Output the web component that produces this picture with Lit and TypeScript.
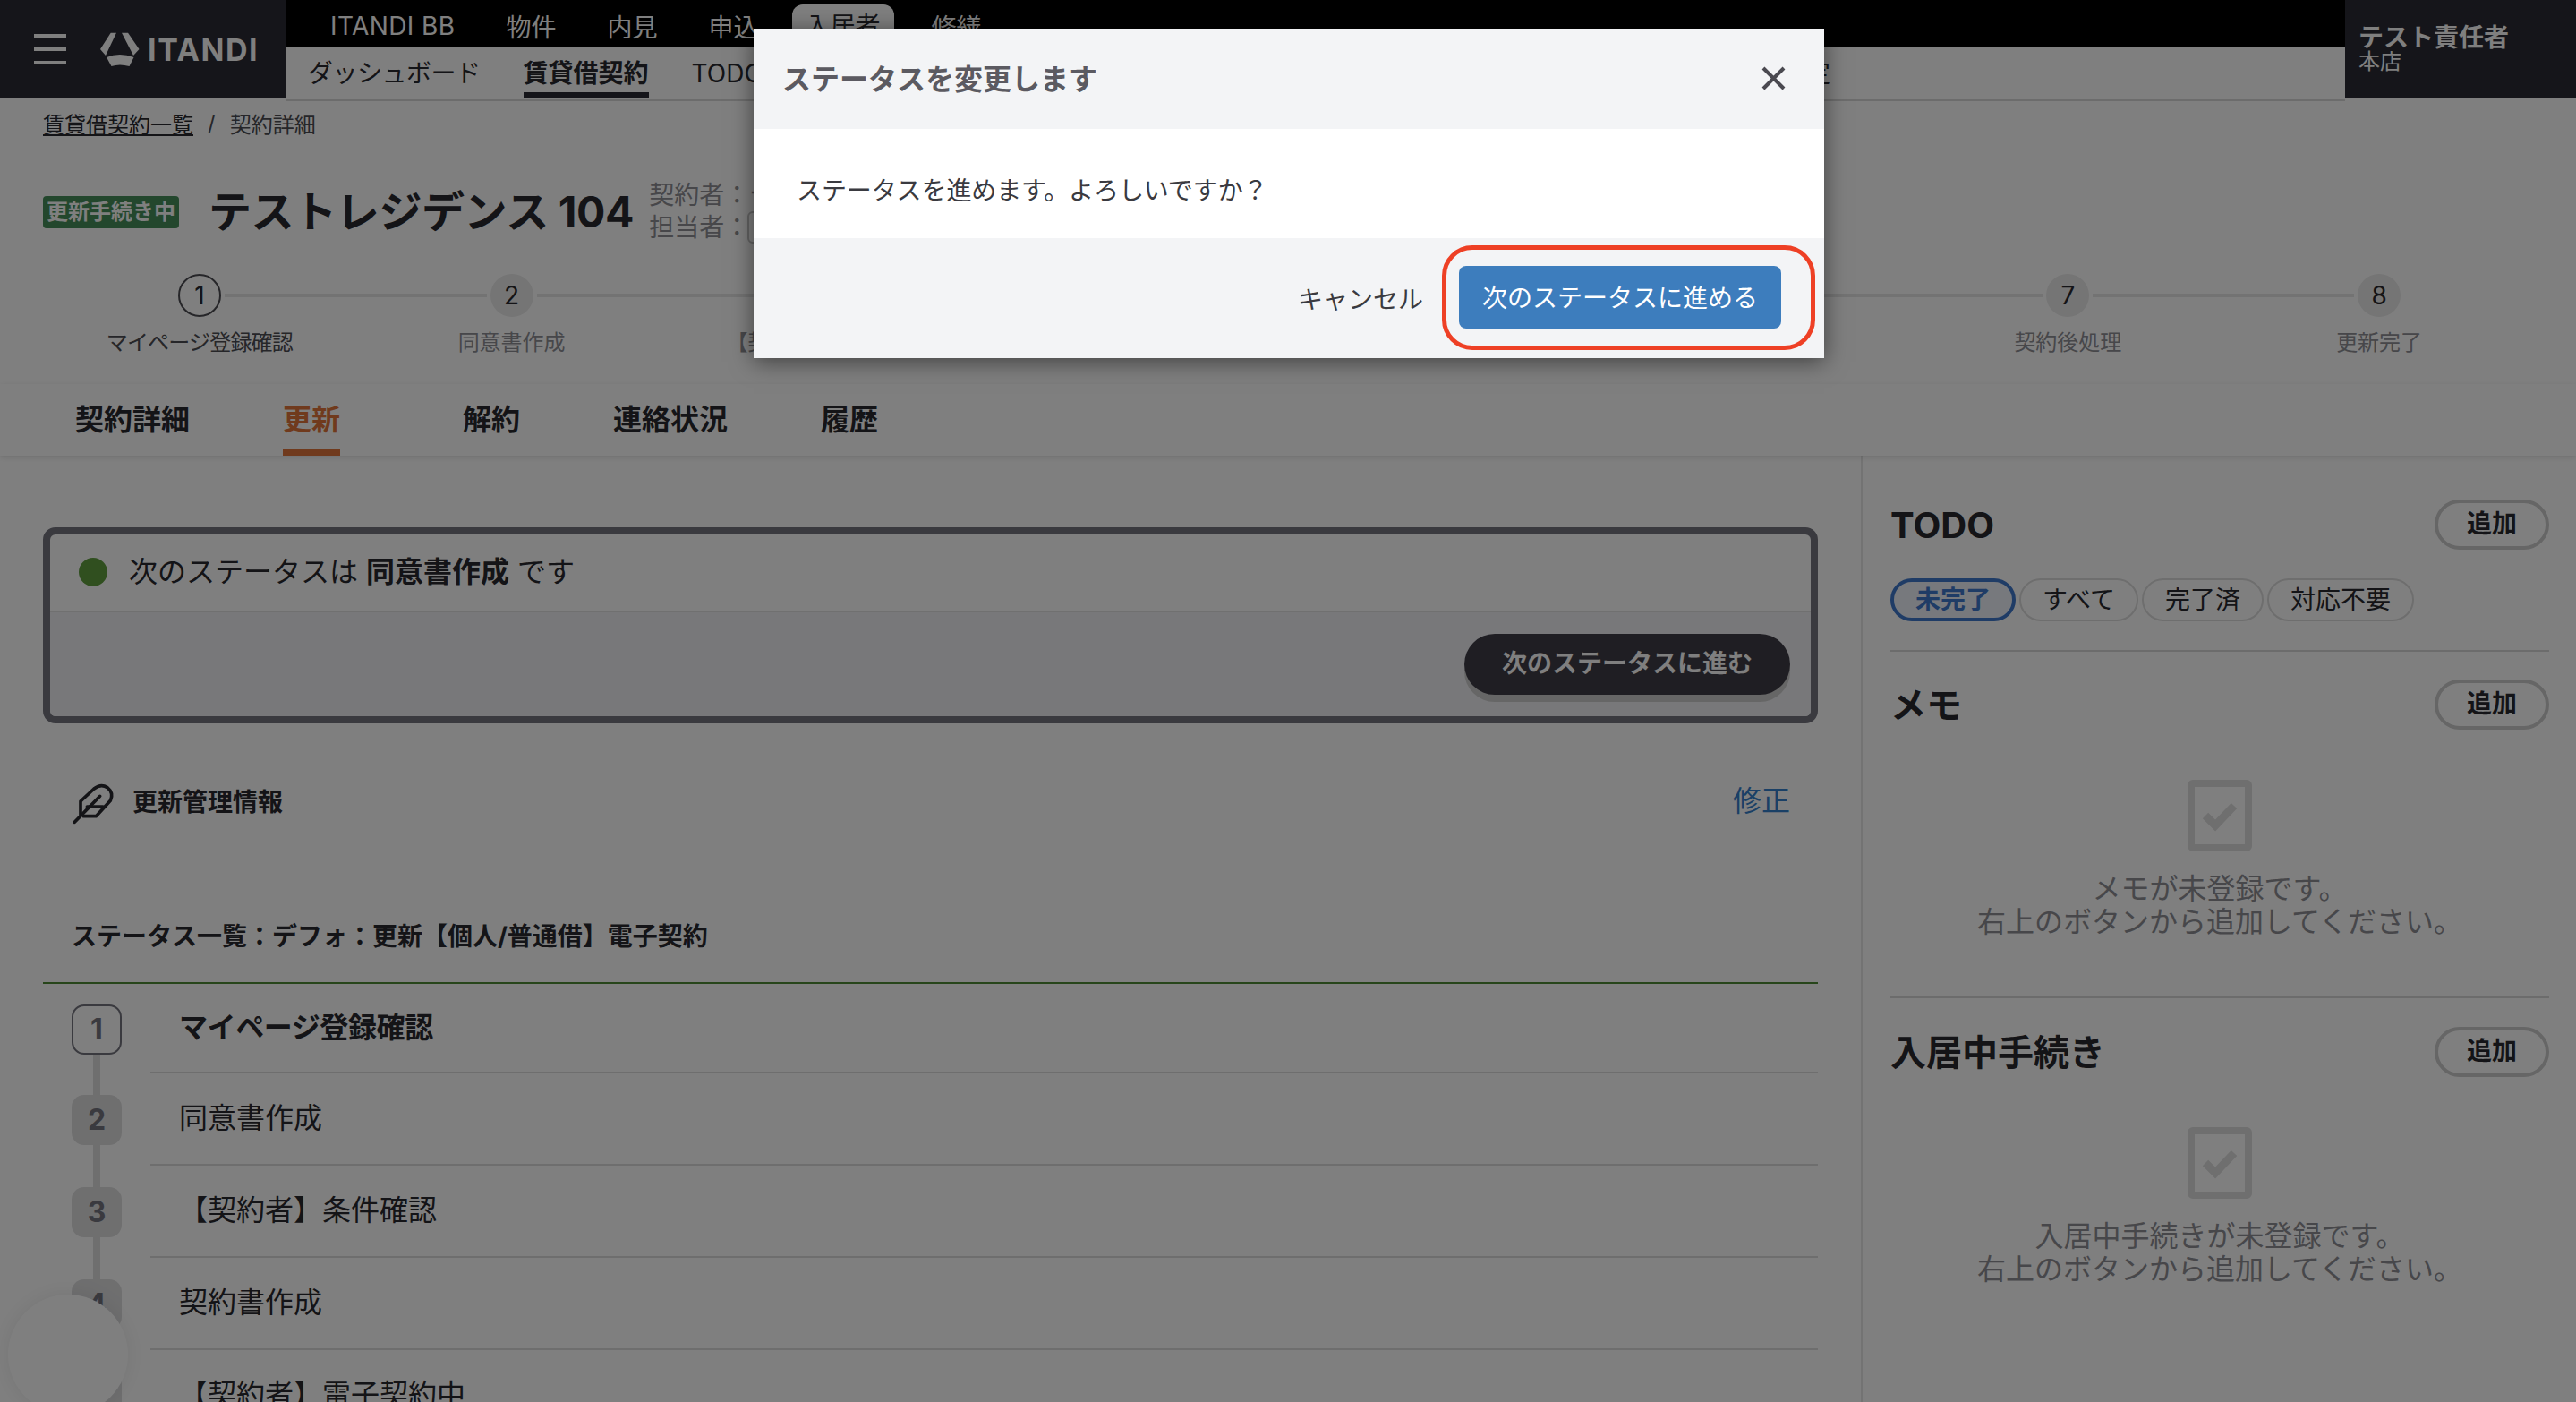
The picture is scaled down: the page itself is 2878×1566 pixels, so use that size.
import { LitElement, html, css } from "lit";
import { customElement } from "lit/decorators.js";

const STEPS = [
  "マイページ登録確認",
  "同意書作成",
  "【契約者】条件確認",
  "契約書作成",
  "【契約者】電子契約中",
  "契約締結",
  "契約後処理",
  "更新完了",
];

const LIST = ["マイページ登録確認", "同意書作成", "【契約者】条件確認", "契約書作成", "【契約者】電子契約中"];

@customElement("app-root")
export class AppRoot extends LitElement {
  static styles = css`
    :host {
      display: block;
      position: relative;
      height: 1566px;
      overflow: hidden;
      background: #fff;
      color: #28282e;
      font-family: Inter, "Noto Sans CJK JP", sans-serif;
      font-size: 28px;
    }
    * {
      box-sizing: border-box;
    }

    /* header */
    .header {
      display: flex;
      height: 110px;
    }
    .brand {
      width: 320px;
      background: #2a2a34;
      display: flex;
      align-items: center;
      padding-left: 38px;
      color: #fff;
    }
    .burger {
      width: 36px;
      height: 34px;
      display: flex;
      flex-direction: column;
      justify-content: space-between;
      margin-right: 38px;
    }
    .burger span {
      height: 4px;
      background: #fff;
    }
    .logo-text {
      font-size: 34px;
      font-weight: 700;
      letter-spacing: 1.6px;
      margin-left: 9px;
    }
    .navs {
      flex: 1;
      display: flex;
      flex-direction: column;
    }
    .topnav {
      height: 54px;
      background: #000;
      color: #fff;
      display: flex;
      align-items: center;
      padding: 5px 0 0 49px;
    }
    .topnav span {
      margin-right: 57px;
    }
    .topnav .brandname {
      letter-spacing: 0.4px;
    }
    .topnav .on {
      align-self: flex-end;
      height: 48px;
      line-height: 48px;
      padding: 0 15px;
      margin: 0 42px 0 -20px;
      background: #fff;
      color: #28282e;
      border-radius: 12px 12px 0 0;
    }
    .subnav {
      flex: 1;
      display: flex;
      align-items: stretch;
      gap: 48px;
      padding: 0 575px 0 24px;
      background: #fff;
      border-bottom: 2px solid #d8d8d8;
    }
    .subnav span {
      line-height: 58px;
    }
    .subnav .dash {
      letter-spacing: -0.5px;
    }
    .subnav .on {
      font-weight: 700;
      height: 56px;
      box-shadow: inset 0 -6px 0 #2a2a34;
    }
    .subnav .last {
      margin-left: auto;
    }
    .user {
      width: 258px;
      background: #2a2a34;
      color: #fff;
      padding: 24px 0 0 15px;
    }
    .user b {
      display: block;
      font-size: 28px;
      line-height: 36px;
    }
    .user small {
      display: block;
      font-size: 24px;
      line-height: 30px;
      margin-top: -6px;
    }

    /* title area */
    .crumbs {
      height: 36px;
      margin-top: 9px;
      padding-left: 48px;
      display: flex;
      align-items: center;
      font-size: 24px;
      color: #4c4c52;
    }
    .crumbs u {
      color: #28282e;
    }
    .crumbs i {
      font-style: normal;
      margin: 0 16px;
    }
    .title-row {
      height: 76px;
      margin-top: 44px;
      padding-left: 48px;
      display: flex;
      align-items: center;
    }
    .badge {
      width: 152px;
      height: 36px;
      line-height: 36px;
      text-align: center;
      font-size: 24px;
      font-weight: 700;
      white-space: nowrap;
      color: #fff;
      background: #468f5a;
      border-radius: 4px;
      margin-right: 33px;
    }
    h1 {
      margin: 0 17px 0 0;
      font-size: 48px;
      font-weight: 700;
      line-height: 76px;
      letter-spacing: -0.4px;
      white-space: nowrap;
    }
    .meta {
      color: #8e8e94;
      line-height: 36px;
      margin-top: -2px;
    }
    .meta div {
      display: flex;
      align-items: center;
      white-space: nowrap;
    }
    .meta em {
      font-style: normal;
      width: 36px;
      height: 36px;
      border: 2px solid #c8c8c8;
      border-radius: 6px;
      margin-left: -2px;
    }

    /* stepper */
    .stepper {
      display: grid;
      grid-template-columns: repeat(8, 1fr);
      margin-top: 31px;
      padding: 0 46px 0 50px;
    }
    .step {
      text-align: center;
    }
    .head {
      display: flex;
      align-items: center;
      gap: 4px;
    }
    .head i {
      flex: 1;
      height: 4px;
      background: #e6e6e6;
    }
    .head i.off {
      background: transparent;
    }
    .num {
      width: 48px;
      height: 48px;
      line-height: 48px;
      border-radius: 50%;
      background: #eaeaea;
      font-size: 28px;
    }
    .step.on .head {
      margin-left: -2px;
    }
    .step.on .num {
      line-height: 44px;
      background: #fff;
      border: 2px solid #4c4c52;
    }
    .label {
      margin-top: 11px;
      font-size: 24px;
      line-height: 36px;
      color: #8e8e94;
      white-space: nowrap;
    }
    .step.on .label {
      color: #4c4c52;
      letter-spacing: -0.8px;
      margin-left: -2px;
    }

    /* tabs */
    .tabs {
      position: relative;
      height: 80px;
      margin-top: 28px;
      padding-left: 84px;
      display: flex;
      gap: 104px;
      font-size: 32px;
      font-weight: 700;
      line-height: 80px;
      box-shadow: 0 2px 6px rgba(0, 0, 0, 0.12);
    }
    .tabs .on {
      color: #e0753a;
      box-shadow: inset 0 -8px 0 #e0753a;
      margin-right: 33px;
    }

    /* content */
    .content {
      display: flex;
    }
    .main {
      width: 2079px;
      padding: 80px 48px 0;
    }
    .status {
      height: 219px;
      border: 8px solid #74747e;
      border-radius: 14px;
      display: flex;
      flex-direction: column;
    }
    .status-top {
      height: 87px;
      padding: 0 0 2px 32px;
      display: flex;
      align-items: center;
      gap: 24px;
      font-size: 32px;
      border-bottom: 2px solid #e0e0e0;
    }
    .status-top span:last-child {
      margin-bottom: 6px;
    }
    .dot {
      width: 32px;
      height: 32px;
      border-radius: 50%;
      background: #609e3f;
    }
    .status-bottom {
      flex: 1;
      background: #f0f0f4;
      padding: 24px 23px 0 0;
      display: flex;
      justify-content: flex-end;
      align-items: flex-start;
      border-radius: 0 0 6px 6px;
    }
    .next {
      width: 364px;
      height: 68px;
      line-height: 66px;
      text-align: center;
      font-weight: 700;
      color: #fff;
      background: #3e3c46;
      border-radius: 34px;
      box-shadow: 0 8px 0 #cccccc;
    }
    .info {
      display: flex;
      align-items: center;
      height: 65px;
      margin-top: 57px;
      padding: 0 31px 0 22px;
      font-weight: 700;
    }
    .info span {
      margin: 0 0 8px -2px;
    }
    .info a {
      margin: 0 0 12px auto;
      font-size: 32px;
      font-weight: 400;
      color: #3580cc;
    }
    .list-title {
      margin-top: 96px;
      padding: 0 0 31px 32px;
      line-height: 40px;
      font-weight: 700;
      border-bottom: 2px solid #4f8a35;
      white-space: nowrap;
    }
    .row {
      display: flex;
      height: 103px;
      padding-left: 32px;
    }
    .row.on {
      height: 100px;
    }
    .marker {
      width: 56px;
      display: flex;
      flex-direction: column;
      align-items: center;
    }
    .marker i {
      width: 8px;
      background: #dededf;
    }
    .marker .pre {
      height: 24px;
    }
    .marker .post {
      flex: 1;
    }
    .box {
      flex: none;
      width: 56px;
      height: 56px;
      line-height: 56px;
      text-align: center;
      border-radius: 14px;
      font-size: 32px;
      font-weight: 700;
      background: #dededf;
      color: #74747e;
    }
    .row.on .box {
      line-height: 52px;
      background: #fff;
      border: 2px solid #74747e;
    }
    .row.on .pre {
      height: 23px;
      background: transparent;
    }
    .row-text {
      flex: 1;
      margin-left: 32px;
      padding-left: 32px;
      font-size: 32px;
      line-height: 99px;
      border-bottom: 2px solid #dcdcdc;
    }
    .row.on .row-text {
      font-weight: 700;
      letter-spacing: -0.4px;
      line-height: 98px;
    }

    /* sidebar */
    .aside {
      flex: 1;
      border-left: 2px solid #e6e6e6;
      padding: 0 30px 0 31px;
      min-height: 1100px;
    }
    .block {
      padding: 31px 0 65px;
      border-bottom: 2px solid #d8d8d8;
    }
    .block:first-child {
      padding: 49px 0 32px;
    }
    .block:last-child {
      padding-top: 32px;
      border-bottom: 0;
    }
    .block-head {
      display: flex;
      justify-content: space-between;
      align-items: center;
      height: 56px;
    }
    h2 {
      margin: 0;
      font-size: 40px;
      font-weight: 700;
    }
    h2.cjk {
      margin-bottom: 4px;
    }
    .add {
      width: 128px;
      height: 56px;
      line-height: 46px;
      text-align: center;
      font-weight: 700;
      border: 4px solid #cccccc;
      border-radius: 28px;
    }
    .chips {
      display: flex;
      gap: 4px;
      margin-top: 32px;
    }
    .chip {
      height: 48px;
      line-height: 44px;
      padding: 0 24px;
      border: 2px solid #dcdcdc;
      border-radius: 24px;
    }
    .chip.on {
      line-height: 40px;
      border: 4px solid #3f78cc;
      background: #eef3fb;
      color: #3f78cc;
      font-weight: 700;
    }
    .empty {
      display: flex;
      flex-direction: column;
      align-items: center;
      margin-top: 56px;
      font-size: 32px;
      line-height: 37px;
      color: #8e8e94;
      text-align: center;
    }
    .empty p {
      margin: 23px 0 0;
    }

    /* launcher bubble, sits under the scrim */
    .bubble {
      position: absolute;
      left: 9px;
      top: 1446px;
      width: 134px;
      height: 134px;
      border-radius: 50%;
      background: #fff;
      box-shadow: 0 0 24px rgba(0, 0, 0, 0.08);
    }

    /* modal */
    .scrim {
      position: absolute;
      inset: 0;
      background: rgba(0, 0, 0, 0.5);
    }
    .modal {
      position: absolute;
      left: 842px;
      top: 32px;
      width: 1196px;
      height: 368px;
      display: flex;
      flex-direction: column;
      background: #f3f4f6;
      box-shadow: 0 4px 24px rgba(0, 0, 0, 0.5);
    }
    .modal-head {
      height: 112px;
      padding: 0 43px 5px 32px;
      display: flex;
      align-items: center;
      justify-content: space-between;
      font-size: 32px;
      font-weight: 700;
      color: #5b5a61;
    }
    .modal-head svg {
      margin-top: 4px;
    }
    .modal-body {
      height: 122px;
      padding-left: 48px;
      line-height: 138px;
      letter-spacing: -0.1px;
      background: #fff;
      color: #3a3a40;
    }
    .modal-foot {
      flex: 1;
      display: flex;
      justify-content: flex-end;
      align-items: center;
      padding-right: 10px;
      color: #3a3a40;
    }
    .ring {
      height: 117px;
      margin: -1px 0 0 21px;
      padding: 18px 33px 0 14px;
      border: 5px solid #ee4025;
      border-radius: 34px;
    }
    .primary {
      width: 360px;
      height: 70px;
      line-height: 72px;
      text-align: center;
      color: #fff;
      background: #3d7dbd;
      border-radius: 8px;
    }
  `;

  private check() {
    return html`<svg width="72" height="80" viewBox="0 0 72 80">
      <rect x="4" y="4" width="64" height="72" rx="2" fill="none" stroke="#dedede" stroke-width="8" />
      <path d="M20 40 L31 51 L52 29" fill="none" stroke="#dedede" stroke-width="9" />
    </svg>`;
  }

  render() {
    return html`
      <div class="header">
        <div class="brand">
          <div class="burger"><span></span><span></span><span></span></div>
          <svg width="44" height="39" viewBox="0 0 44 39" fill="#fff">
            <path d="M11.7 .7H18L6 26 0 19Z" />
            <path d="M24 .7H31L43.5 19 37 26Z" />
            <path d="M7 28Q21.5 22 37.5 28L32.5 38Q21.5 35 12.5 38Z" />
          </svg>
          <span class="logo-text">ITANDI</span>
        </div>
        <div class="navs">
          <div class="topnav">
            <span class="brandname">ITANDI BB</span><span>物件</span><span>内見</span><span>申込</span>
            <span class="on">入居者</span><span>修繕</span>
          </div>
          <div class="subnav">
            <span class="dash">ダッシュボード</span><span class="on">賃貸借契約</span><span>TODO</span>
            <span class="last">設定</span>
          </div>
        </div>
        <div class="user"><b>テスト責任者</b><small>本店</small></div>
      </div>

      <div class="crumbs"><u>賃貸借契約一覧</u><i>/</i><span>契約詳細</span></div>
      <div class="title-row">
        <span class="badge">更新手続き中</span>
        <h1>テストレジデンス 104</h1>
        <div class="meta">
          <div>契約者：テスト</div>
          <div>担当者：<em></em></div>
        </div>
      </div>

      <div class="stepper">
        ${STEPS.map(
          (s, i) => html`<div class="step ${i === 0 ? "on" : ""}">
            <div class="head">
              <i class=${i === 0 ? "off" : ""}></i>
              <div class="num">${i + 1}</div>
              <i class=${i === 7 ? "off" : ""}></i>
            </div>
            <div class="label">${s}</div>
          </div>`
        )}
      </div>

      <div class="tabs">
        <span>契約詳細</span><span class="on">更新</span><span>解約</span><span>連絡状況</span><span>履歴</span>
      </div>

      <div class="content">
        <div class="main">
          <div class="status">
            <div class="status-top">
              <span class="dot"></span>
              <span>次のステータスは <b>同意書作成</b> です</span>
            </div>
            <div class="status-bottom"><div class="next">次のステータスに進む</div></div>
          </div>

          <div class="info">
            <svg width="80" height="65" viewBox="0 0 240 195" fill="none" stroke="#28282e" stroke-width="11" stroke-linecap="round" stroke-linejoin="round">
              <path d="M60 135V90L105 48Q128 30 150 44Q172 62 160 88L112 140H70" />
              <path d="M40 160L125 73" />
              <path d="M82 108H135" />
            </svg>
            <span>更新管理情報</span>
            <a>修正</a>
          </div>

          <div class="list-title">ステータス一覧：デフォ：更新【個人/普通借】電子契約</div>
          ${LIST.map(
            (t, i) => html`<div class="row ${i === 0 ? "on" : ""}">
              <div class="marker">
                <i class="pre"></i>
                <div class="box">${i + 1}</div>
                <i class="post"></i>
              </div>
              <div class="row-text">${t}</div>
            </div>`
          )}
        </div>

        <div class="aside">
          <div class="block">
            <div class="block-head"><h2>TODO</h2><div class="add">追加</div></div>
            <div class="chips">
              <span class="chip on">未完了</span><span class="chip">すべて</span><span class="chip">完了済</span><span class="chip">対応不要</span>
            </div>
          </div>
          <div class="block">
            <div class="block-head"><h2 class="cjk">メモ</h2><div class="add">追加</div></div>
            <div class="empty">
              ${this.check()}
              <p>メモが未登録です。<br />右上のボタンから追加してください。</p>
            </div>
          </div>
          <div class="block">
            <div class="block-head"><h2 class="cjk">入居中手続き</h2><div class="add">追加</div></div>
            <div class="empty">
              ${this.check()}
              <p>入居中手続きが未登録です。<br />右上のボタンから追加してください。</p>
            </div>
          </div>
        </div>
      </div>

      <div class="bubble"></div>
      <div class="scrim"></div>

      <div class="modal">
        <div class="modal-head">
          <span>ステータスを変更します</span>
          <svg width="27" height="27" viewBox="0 0 27 27" stroke="#4a4950" stroke-width="4"><path d="M2 2L25 25M25 2L2 25" /></svg>
        </div>
        <div class="modal-body">ステータスを進めます。よろしいですか？</div>
        <div class="modal-foot">
          <span>キャンセル</span>
          <div class="ring"><div class="primary">次のステータスに進める</div></div>
        </div>
      </div>
    `;
  }
}

declare global {
  interface HTMLElementTagNameMap {
    "app-root": AppRoot;
  }
}
